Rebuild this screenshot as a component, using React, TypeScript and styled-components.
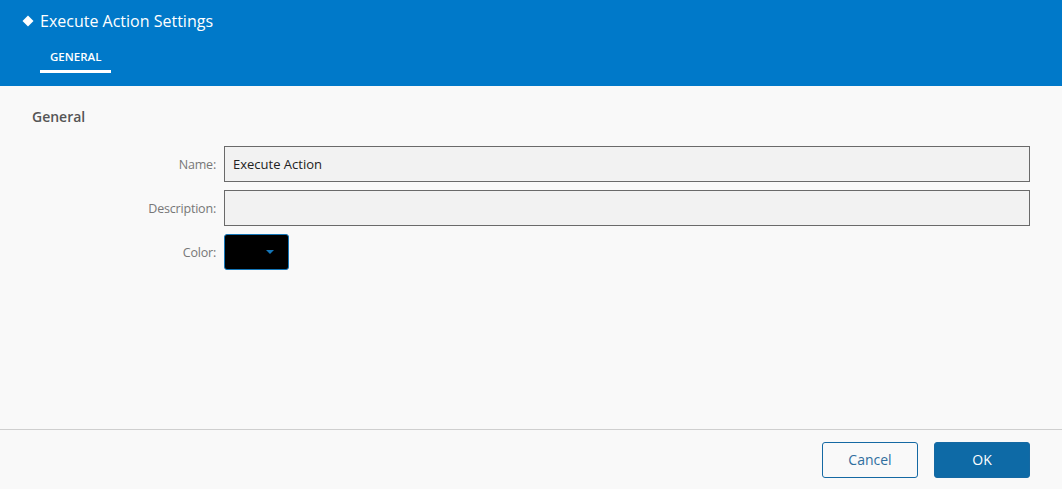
import styled, { createGlobalStyle } from "styled-components";

const GlobalStyle = createGlobalStyle`
    html, body {
        margin: 0;
        padding: 0;
        background: #f9f9f9;
        font-family: "Open Sans", "Noto Sans", sans-serif;
    }
`

const Page = styled.div`
    width: 1062px;
    height: 489px;
    display: flex;
    flex-direction: column;
    background: #f9f9f9;
`
const Header = styled.div`
    background-color: #0079c9;
    height: 86px;
    box-sizing: border-box;
    padding: 9px 0 0 22px;
    color: #ffffff;
`
const TitleRow = styled.div`
    display: flex;
    align-items: center;
    gap: 6px;
    height: 24px;
    font-size: 16px;
`
const Tabs = styled.div`
    display: flex;
    margin-top: 12px;
    padding-left: 18px;
`
const Tab = styled.div<{ $active?: boolean }>`
    font-size: 11.5px;
    font-weight: 600;
    padding: 4px 10px 0;
    height: 21px;
    box-sizing: content-box;
    border-bottom: 3px solid ${p => p.$active ? "#ffffff" : "transparent"};
`
const Body = styled.div`
    flex: 1;
    padding: 21px 32px 0;
    border-bottom: 1px solid #cfcfcf;
`
const Section = styled.div`
    font-size: 14px;
    font-weight: 600;
    color: #555555;
    margin-bottom: 20px;
`
const Form = styled.div`
    display: grid;
    grid-template-columns: 160px 806px;
    column-gap: 8px;
    row-gap: 8px;
    padding-left: 24px;
    align-items: center;
`
const Label = styled.label`
    text-align: right;
    font-size: 12.5px;
    letter-spacing: -0.2px;
    color: #777777;
`
const Input = styled.div`
    height: 36px;
    box-sizing: border-box;
    background: #f2f2f2;
    border: 1px solid #6a6a6a;
    font-size: 13px;
    color: #222222;
    padding: 0 8px;
    display: flex;
    align-items: center;
`
const ColorButton = styled.div`
    width: 65px;
    height: 36px;
    box-sizing: border-box;
    background: #000000;
    border: 1px solid #1476b8;
    border-radius: 3px;
    display: flex;
    align-items: center;
    justify-content: flex-end;
    padding-right: 14px;
`
const Caret = styled.span`
    width: 0;
    height: 0;
    border-left: 4px solid transparent;
    border-right: 4px solid transparent;
    border-top: 4px solid #1476b8;
`
const Footer = styled.div`
    height: 59px;
    display: flex;
    align-items: center;
    justify-content: flex-end;
    gap: 16px;
    padding-right: 32px;
`
const Button = styled.button<{ $primary?: boolean }>`
    width: 96px;
    height: 36px;
    border-radius: 3px;
    font-family: inherit;
    font-size: 14px;
    border: 1px solid #1569a3;
    background: ${p => p.$primary ? "#0e6aa6" : "#f9f9f9"};
    color: ${p => p.$primary ? "#ffffff" : "#2f6e9e"};
`

const App = () => {
    return (
        <Page>
            <GlobalStyle />
            <Header>
                <TitleRow>
                    <svg width="12" height="12" viewBox="0 0 12 12">
                        <path d="M6 0.5 L11.5 6 L6 11.5 L0.5 6 Z" fill="#ffffff" />
                    </svg>
                    Execute Action Settings
                </TitleRow>
                <Tabs>
                    <Tab $active>GENERAL</Tab>
                </Tabs>
            </Header>
            <Body>
                <Section>General</Section>
                <Form>
                    <Label>Name:</Label>
                    <Input>Execute Action</Input>
                    <Label>Description:</Label>
                    <Input />
                    <Label>Color:</Label>
                    <ColorButton><Caret /></ColorButton>
                </Form>
            </Body>
            <Footer>
                <Button>Cancel</Button>
                <Button $primary>OK</Button>
            </Footer>
        </Page>
    )
}
export default App;
